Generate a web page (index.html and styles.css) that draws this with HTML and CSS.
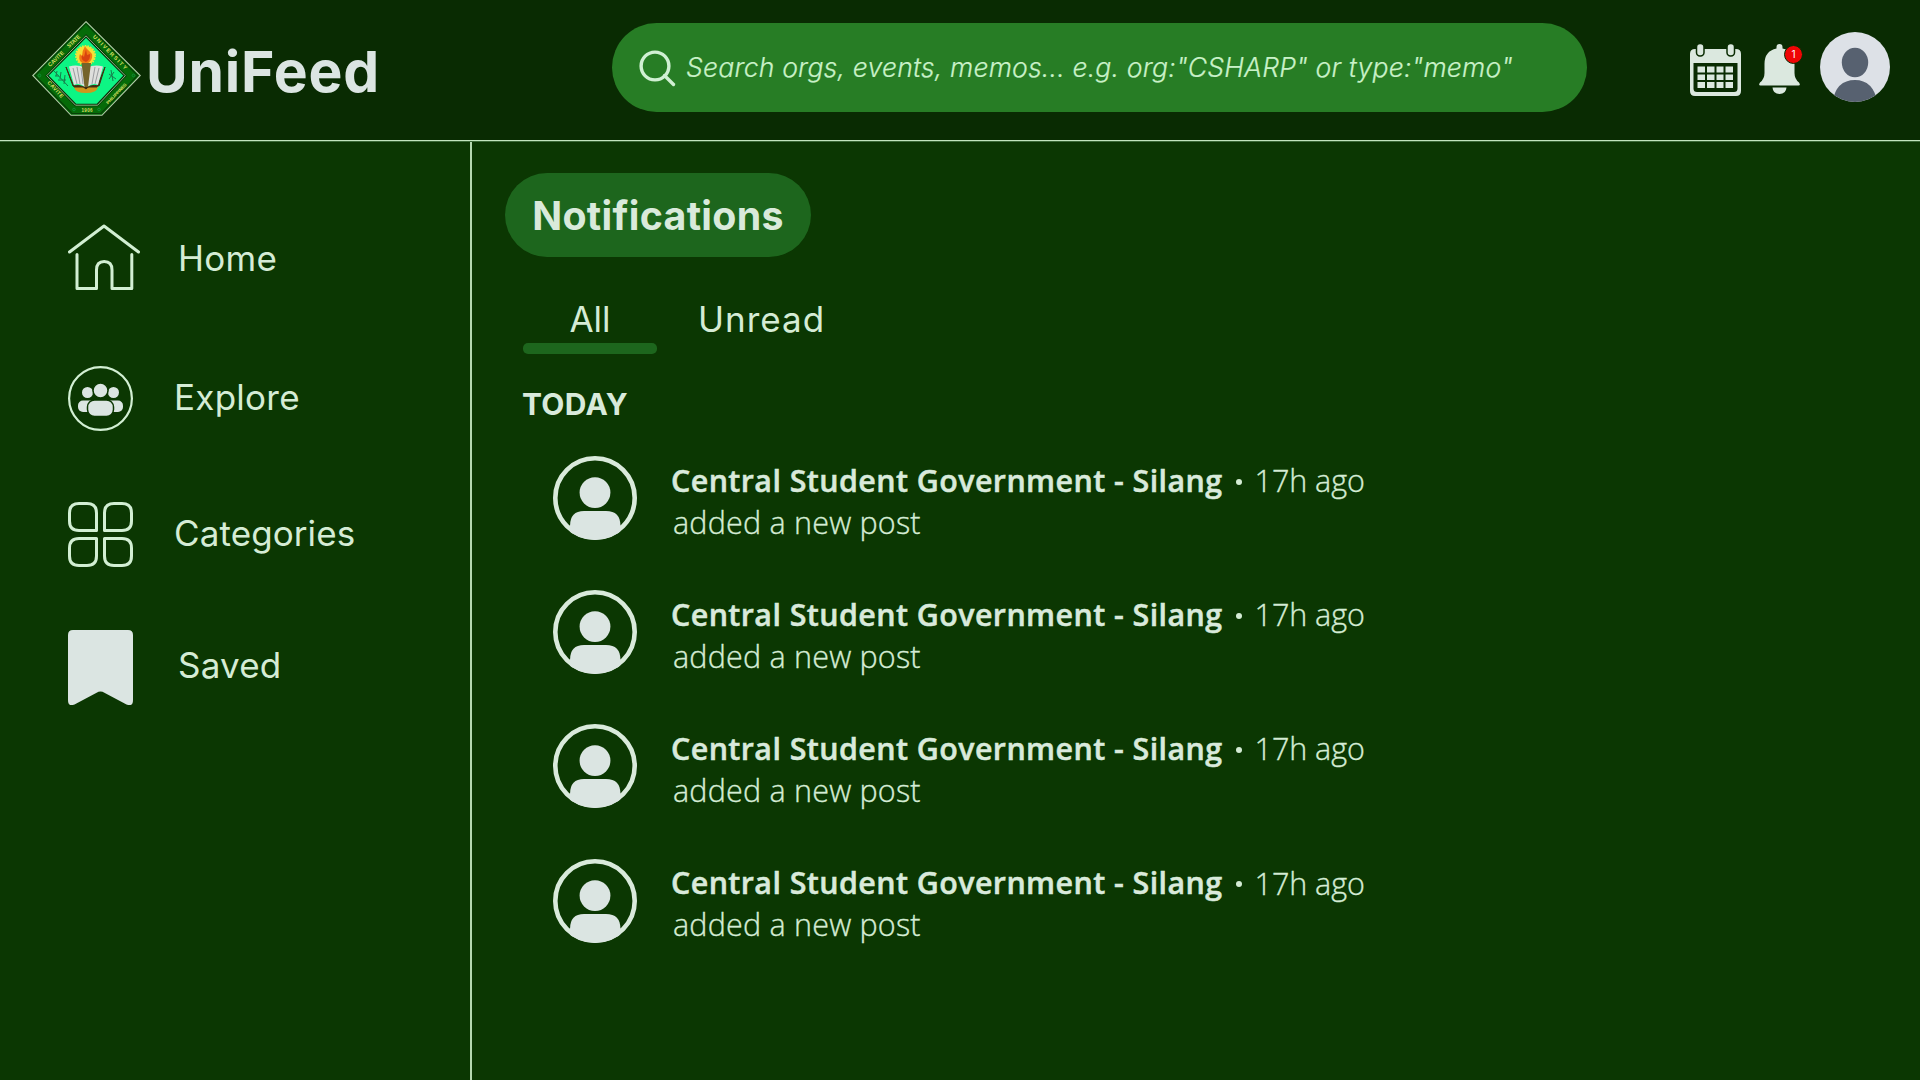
FILE: index.html
```html
<!DOCTYPE html>
<html lang="en">
<head>
<meta charset="utf-8">
<title>UniFeed</title>
<link rel="stylesheet" href="styles.css">
</head>
<body>
<svg width="0" height="0" class="defs">
  <symbol id="person" viewBox="0 0 84 84">
    <clipPath id="disc"><circle cx="42" cy="42" r="42"/></clipPath>
    <circle cx="42" cy="42" r="39.7" fill="none" stroke="#d9eadb" stroke-width="4.6"/>
    <circle cx="42" cy="36.6" r="15.4" fill="#dbe5e2"/>
    <path clip-path="url(#disc)" d="M17 84V70Q17 55 31 55H53Q67.500 55 67.500 70V84Z" fill="#dbe5e2"/>
  </symbol>
</svg>
<header class="topbar">
  <div class="brand">
    <svg class="logo" viewBox="0 0 109 95">
      <path d="M54 .7L108.300 54.500L70 94.300H39L.7 54.500Z" fill="#056b08" stroke="#b5c9ab" stroke-width="1.1"/>
      <path d="M54 2.800L105.600 54.500L69 92.500H40L3 54.500Z" fill="none" stroke="#064006" stroke-width="1.2"/>
      <path d="M54 15L93 54.700L65.500 84H43.500L15 54.700Z" fill="#0df584" stroke="#0a3208" stroke-width="2.6"/>
      <path d="M54 14.800L93.300 54.700L65.700 84.200H43.500L14.700 54.700Z" fill="none" stroke="#a9d8a0" stroke-width=".8"/>
      <g class="logo-text">
        <text transform="translate(18 46) rotate(-44)" textLength="20">CAVITE</text>
        <text transform="translate(37 27) rotate(-43)" textLength="16">STATE</text>
        <text transform="translate(60.500 16) rotate(45.500)" textLength="46">UNIVERSITY</text>
        <text transform="translate(15 62) rotate(47)" textLength="21">CAVITE</text>
        <text class="small" transform="translate(76 83.500) rotate(-46)" textLength="27">PHILIPPINES</text>
        <text class="small" x="49.500" y="91" textLength="11">1906</text>
      </g>
      <g fill="none" stroke="#118c37" stroke-width="1"><circle cx="7.500" cy="54.500" r="1.300"/><circle cx="101.500" cy="54.500" r="1.300"/><circle cx="42" cy="88.500" r="1.300"/><circle cx="67" cy="88.500" r="1.300"/></g>
      <circle cx="53.500" cy="34.500" r="9.400" fill="#f6df35" stroke="#e9e43c" stroke-width="2.200" stroke-dasharray="1.600 1.100"/>
      <path d="M53 25C54 28 58 30 60 33C61 38 58 42 53.500 43C48 42 46 38 48 33L50 35Q50 30 53 25Z" fill="#f27a12"/>
      <path d="M54 28L55 34L58 33Q59 38 54 41Q48 39 50 34L52 36Z" fill="#d94310"/>
      <path d="M42 66H66Q65 72 54 72Q43 72 42 66Z" fill="#cf981c"/>
      <path d="M34 46L42 66H65L73 46L67 65Q58 63 54 68Q49 63 41 65Z" fill="#432e12" stroke="#432e12"/>
      <path d="M37 45.500Q46 43 53 47V66Q47 61 42 64Z" fill="#dedfdd"/>
      <path d="M71 45.500Q62 43 55 47V66Q61 61 66 64Z" fill="#dedfdd"/>
      <path d="M41 47L45 63M45 46L48 63M49 47L51 63M67 47L63 63M63 46L60 63" fill="none" stroke="#898b91" stroke-width=".8"/>
      <path d="M49.500 42H59L56 66H52.500Z" fill="#75642a"/>
      <path d="M22 50L36 65M25 50L24 55M29 51L28 58M33 54L32 63M23 55L27 55M26 59L34 59M77 53L84 58M82 51L77 58M79 49L81 60" fill="none" stroke="#187d4c" stroke-width="1"/>
    </svg>
    <span class="wordmark">UniFeed</span>
  </div>
  <div class="search">
    <svg class="search-icon" viewBox="0 0 37 37"><circle cx="16" cy="16" r="13.900"/><path d="M25.500 25.500L34.500 34.500"/></svg>
    <span>Search orgs, events, memos... e.g. org:"CSHARP" or type:"memo"</span>
  </div>
  <div class="actions">
    <svg class="calendar" viewBox="0 0 51 52">
      <path fill-rule="evenodd" d="M5 5H46Q51 5 51 10V47Q51 52 46 52H5Q0 52 0 47V10Q0 5 5 5ZM3.500 19V44.500Q3.500 48 7 48H44Q47.500 48 47.500 44.500V19Z"/>
      <path d="M7.500 22.500H15V28.500H7.500ZM17 22.500H24.500V28.500H17ZM26.500 22.500H33.500V28.500H26.500ZM35.500 22.500H43V28.500H35.500ZM7.500 30.500H15V36H7.500ZM17 30.500H24.500V36H17ZM26.500 30.500H33.500V36H26.500ZM35.500 30.500H43V36H35.500ZM7.500 38H15V44H7.500ZM17 38H24.500V44H17ZM26.500 38H33.500V44H26.500ZM35.500 38H43V44H35.500Z"/>
      <g stroke="#092b02" stroke-width="1.500"><rect x="6.500" y="-.5" width="7.500" height="12.500" rx="3.500"/><rect x="37" y="-.5" width="7.500" height="12.500" rx="3.500"/></g>
    </svg>
    <div class="bell">
      <svg viewBox="0 0 41 50"><path d="M17.500 4.500V3Q17.500 0 20.500 0Q23.500 0 23.500 3V4.500Q35.500 7 35.500 20V29Q35.500 35 40 38.500Q42 41.500 39.500 41.500H1.500Q-1 41.500 1 38.500Q5.500 35 5.500 29V20Q5.500 7 17.500 4.500Z"/><path d="M13.500 43.500H27.500Q27 50 20.500 50Q14 50 13.500 43.500Z"/></svg>
      <span class="badge">1</span>
    </div>
    <svg class="profile" viewBox="0 0 70 70"><clipPath id="face"><circle cx="35" cy="35" r="35"/></clipPath><circle cx="35" cy="35" r="35" fill="#dde1e7"/><g fill="#576170" clip-path="url(#face)"><ellipse cx="35" cy="30.500" rx="13.200" ry="14.800"/><path d="M12.500 70Q16 48 35 48Q53 48 57.500 70Z"/></g></svg>
  </div>
</header>
<div class="layout">
  <nav class="sidebar">
    <a class="nav-item home"><svg viewBox="0 0 72 66"><path d="M1.500 28L36 2L70.500 28M9 30.500V64.500H28.500V46Q28.500 37.500 36.200 37.500Q44 37.500 44 46V64.500H63.800V30.500"/></svg><span>Home</span></a>
    <a class="nav-item explore"><svg viewBox="0 0 65 65"><circle cx="32.500" cy="32.500" r="31.400"/><g class="solid"><circle cx="19.500" cy="26.500" r="5.500"/><circle cx="45.500" cy="26.500" r="5.500"/><rect x="10" y="34.500" width="18" height="11.500" rx="5"/><rect x="37" y="34.500" width="18" height="11.500" rx="5"/><circle class="cut" cx="32.500" cy="24.500" r="7.500"/><rect class="cut" x="19.500" y="34" width="26" height="16.500" rx="7"/></g></svg><span>Explore</span></a>
    <a class="nav-item categories"><svg viewBox="0 0 65 65"><path d="M11 1.500H19Q28.500 1.500 28.500 11V28.500H11Q1.500 28.500 1.500 19V11Q1.500 1.500 11 1.500ZM46 1.500H54Q63.500 1.500 63.500 11V19Q63.500 28.500 54 28.500H36.500V11Q36.500 1.500 46 1.500ZM11 36.500H28.500V54Q28.500 63.500 19 63.500H11Q1.500 63.500 1.500 54V46Q1.500 36.500 11 36.500ZM36.500 36.500H54Q63.500 36.500 63.500 46V54Q63.500 63.500 54 63.500H46Q36.500 63.500 36.500 54Z"/></svg><span>Categories</span></a>
    <a class="nav-item saved"><svg viewBox="0 0 65 75"><path class="solid" d="M5 0H60Q65 0 65 5V70Q65 77 58.500 74.500L34.500 61.800Q32.500 61 30.500 61.800L6.500 74.500Q0 77 0 70V5Q0 0 5 0Z"/></svg><span>Saved</span></a>
  </nav>
  <main class="content">
    <h1>Notifications</h1>
    <div class="tabs"><a class="tab active">All</a><a class="tab unread">Unread</a></div>
    <h2>TODAY</h2>
    <ul class="feed">
      <li><svg><use href="#person"/></svg><div><p><b>Central Student Government - Silang</b><i></i><time>17h ago</time></p><p class="action">added a new post</p></div></li>
      <li><svg><use href="#person"/></svg><div><p><b>Central Student Government - Silang</b><i></i><time>17h ago</time></p><p class="action">added a new post</p></div></li>
      <li><svg><use href="#person"/></svg><div><p><b>Central Student Government - Silang</b><i></i><time>17h ago</time></p><p class="action">added a new post</p></div></li>
      <li><svg><use href="#person"/></svg><div><p><b>Central Student Government - Silang</b><i></i><time>17h ago</time></p><p class="action">added a new post</p></div></li>
    </ul>
  </main>
</div>
</body>
</html>
```
FILE: styles.css
```css
* { box-sizing: border-box; }
body { margin: 0; height: 1080px; overflow: hidden; display: flex; flex-direction: column; background: #0b3702; color: #d5ecd5; font-family: Inter, sans-serif; }
h1, h2, p, ul { margin: 0; padding: 0; }
svg { display: block; flex: none; }
.defs { position: absolute; }

.topbar { height: 141px; flex: none; display: flex; align-items: flex-start; background: #092b02; border-bottom: 1px solid #c3e6bf; }
.brand { display: flex; width: 612px; padding: 21px 0 0 32px; }
.logo { width: 109px; height: 95px; }
.logo-text { fill: #d5df61; font: 700 5.500px "Liberation Sans", sans-serif; }
.logo-text .small { font-size: 4.500px; }
.wordmark { margin-left: 5px; height: 95px; line-height: 101px; font-size: 57px; font-weight: 700; letter-spacing: .800px; color: #dbe5e2; }
.search { width: 975px; height: 89px; margin-top: 23px; border-radius: 44.500px; background: #277d25; display: flex; align-items: center; padding-left: 27px; color: #c9f1c8; }
.search-icon { width: 37px; height: 37px; margin-top: 1px; fill: none; stroke: #d0f0d3; stroke-width: 3.400; stroke-linecap: round; }
.search span { margin: -2px 0 0 10px; font-size: 26.600px; font-weight: 300; font-style: italic; letter-spacing: .160px; white-space: nowrap; -webkit-text-stroke: .2px; }
.actions { display: flex; padding: 32px 0 0 103px; fill: #dbe8df; }
.calendar { width: 51px; height: 52px; margin-top: 12px; overflow: visible; }
.bell { position: relative; margin: 12px 20px 0 18px; }
.bell svg { width: 41px; height: 50px; }
.badge { position: absolute; left: 25px; top: 1px; width: 19px; height: 19px; border: 1px solid #092b02; border-radius: 50%; background: #ef0505; color: #fff; font-size: 10px; line-height: 17px; text-align: center; }
.profile { width: 70px; height: 70px; }

.layout { flex: 1; display: flex; border-top: 1px solid #3c6a38; }
.sidebar { width: 472px; border-right: 2px solid #b5d8b0; padding: 82px 0 0 68px; }
.nav-item { display: flex; align-items: center; font-size: 35px; line-height: 40px; }
.nav-item svg { width: 65px; height: 65px; fill: none; stroke: #d2efd3; stroke-width: 3; stroke-linecap: round; stroke-linejoin: round; }
.nav-item .solid { fill: #dbe5e2; stroke: none; }
.nav-item .cut { stroke: #0b3702; stroke-width: 1.500; }
.home svg { width: 72px; height: 66px; }
.home span { margin: 2px 0 0 38px; letter-spacing: .300px; }
.explore { margin-top: 76px; }
.explore svg { stroke-width: 2.200; }
.explore span { margin: -3px 0 0 41px; letter-spacing: .250px; }
.categories { margin-top: 71px; }
.categories span { margin: -3px 0 0 41px; letter-spacing: .100px; }
.saved { margin-top: 63px; }
.saved svg { height: 75px; }
.saved span { margin: -5px 0 0 45px; letter-spacing: .200px; }

.content { flex: 1; padding: 31px 0 0 33px; }
h1 { width: 306px; height: 84px; border-radius: 42px; background: #1d661d; text-align: center; font-size: 39.300px; line-height: 85px; letter-spacing: .300px; color: #d9eadb; }
.tabs { display: flex; margin: 43px 0 0 18px; height: 54px; font-size: 35px; line-height: 39px; }
.tab { height: 54px; text-align: center; }
.active { width: 134px; display: flex; flex-direction: column; }
.active::after { content: ""; height: 11px; margin-top: 4px; border-radius: 5px; background: #1d661d; }
.unread { margin-left: 41px; letter-spacing: 1px; }
h2 { margin: 30px 0 0 17px; font-size: 30px; line-height: 40px; letter-spacing: .300px; color: #d9eadb; }
.feed { list-style: none; margin: 32px 0 0 48px; display: flex; flex-direction: column; gap: 50.200px; }
.feed li { display: flex; height: 84px; gap: 34px; }
.feed svg { width: 84px; height: 84px; }
.feed div { padding-top: 4px; }
.feed p { display: flex; height: 41px; align-items: center; font: 300 30.500px/40px "Open Sans", sans-serif; white-space: nowrap; -webkit-text-stroke: .35px; }
.feed b { font-size: 30.400px; font-weight: 600; letter-spacing: .430px; color: #d9eadb; -webkit-text-stroke: .5px; }
.feed i { width: 6px; height: 6px; margin: 2px 13px 0 13px; border-radius: 50%; background: #d5ecd5; }
.feed time { margin-top: -1px; letter-spacing: -.050px; }
.feed .action { padding-left: 2px; letter-spacing: .200px; }
```
